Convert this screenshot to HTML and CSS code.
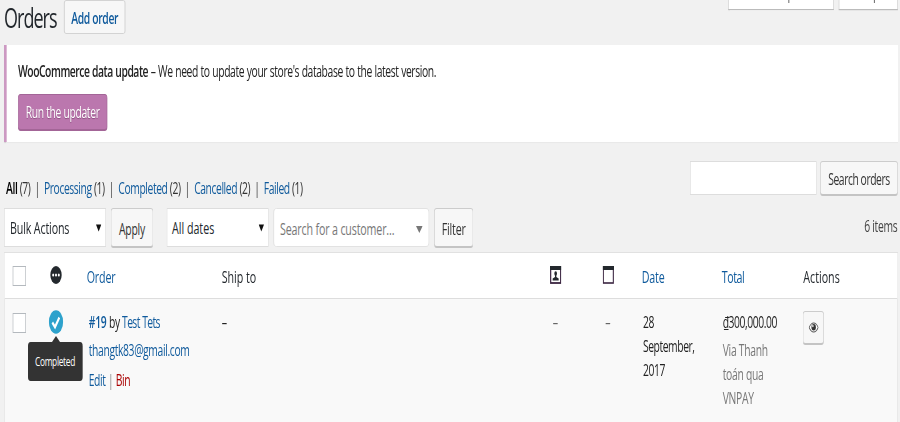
FILE: index.html
```html
<!DOCTYPE html>
<html lang="en">
<head>
<meta charset="utf-8">
<title>Orders</title>
<link rel="stylesheet" href="styles.css">
</head>
<body>
<div class="page">
  <header class="top">
    <h1>Orders</h1>
    <a class="add-order">Add order</a>
    <div class="screen-meta">
      <div class="meta-tab options"><span>Screen Options</span></div>
      <div class="meta-tab help"><span>Help</span></div>
    </div>
  </header>

  <section class="notice">
    <p><strong>WooCommerce data update</strong> – <span class="msg">We need to update your store's database to the latest version.</span></p>
    <button class="btn primary">Run the updater</button>
  </section>

  <div class="search-row">
    <nav class="views"><b>All</b> <i>(7)</i><s>|</s><a>Processing</a> <i>(1)</i><s>|</s><a>Completed</a> <i>(2)</i><s>|</s><a>Cancelled</a> <i>(2)</i><s>|</s><a>Failed</a> <i>(1)</i></nav>
    <div class="search-input"></div>
    <button class="btn search-btn">Search orders</button>
  </div>

  <div class="filters">
    <div class="select bulk"><span>Bulk Actions</span><svg width="8" height="8" viewBox="0 0 9 8"><path d="M0 0h9L4.500 8z"/></svg></div>
    <button class="btn apply">Apply</button>
    <div class="select dates"><span>All dates</span><svg width="8" height="8" viewBox="0 0 9 8"><path d="M0 0h9L4.500 8z"/></svg></div>
    <div class="select customer"><span>Search for a customer...</span><svg width="10" height="7" viewBox="0 0 10 7"><path d="M0 0h10L5 7z"/></svg></div>
    <button class="btn filter">Filter</button>
    <span class="count">6 items</span>
  </div>

  <main class="table">
    <div class="row head">
      <div class="check"><span class="box"></span></div>
      <div class="status"><svg width="18" height="20" viewBox="0 0 18 20"><ellipse cx="9" cy="10" rx="8.500" ry="9" fill="#23282d"/><g fill="#fff"><circle cx="4.800" cy="10" r="1.500"/><circle cx="9" cy="10" r="1.500"/><circle cx="13.200" cy="10" r="1.500"/></g></svg></div>
      <div><a>Order</a></div>
      <div class="ship">Ship to</div>
      <div class="icon"><svg width="17" height="18" viewBox="0 0 17 18"><rect x="1" y="1" width="15" height="16" fill="#fff" stroke="#3a2440" stroke-width="1.800"/><path fill="#23282d" d="M0 0h17v4H0zM6.500 7.500a2 2.200 0 0 1 4 0c0 1-.5 1.700-1 2.200v1.200l3.500 1.600V14.500H4v-2l3.500-1.600V9.700c-.5-.5-1-1.200-1-2.200z"/></svg></div>
      <div class="icon"><svg width="17" height="18" viewBox="0 0 17 18"><rect x="1" y="1" width="15" height="16" fill="#fff" stroke="#3a2440" stroke-width="1.600"/><path fill="#23282d" d="M0 0h17v4H0z"/></svg></div>
      <div><a>Date</a></div>
      <div><a class="total-h">Total</a></div>
      <div class="actions-h">Actions</div>
    </div>
    <div class="row order">
      <div class="check"><span class="box"></span></div>
      <div class="status">
        <svg width="22" height="24" viewBox="0 0 22 24"><ellipse cx="11" cy="12" rx="10.700" ry="11.700" fill="#2ea2cc"/><path d="M5.500 12.500l4 4.500L16 7.500" fill="none" stroke="#fff" stroke-width="3"/></svg>
        <div class="tip">Completed</div>
      </div>
      <div class="cell-order">
        <p><a><b>#19</b></a> by <a class="name">Test Tets</a></p>
        <p class="mail"><a>thangtk83@gmail.com</a></p>
        <p class="edit"><a>Edit</a> <i>|</i> <a class="bin">Bin</a></p>
      </div>
      <div class="cell-ship">–</div>
      <div class="cell-dash">–</div>
      <div class="cell-dash">–</div>
      <div class="cell-date">28<br>September,<br>2017</div>
      <div class="cell-total"><span class="amount">₫300,000.00</span><small>Via Thanh<br>toán qua<br>VNPAY</small></div>
      <div class="cell-actions"><button class="btn view"><svg width="15" height="11" viewBox="0 0 15 11"><path d="M.7 5.500Q3.500 1 7.500 1t6.800 4.500Q11.500 10 7.500 10T.7 5.500z" fill="#fff" stroke="#555" stroke-width="1.200"/><circle cx="7.500" cy="5.200" r="3.300" fill="#333"/><circle cx="6.300" cy="4" r="1.200" fill="#ddd"/></svg></button></div>
    </div>
  </main>
</div>
</body>
</html>
```
FILE: styles.css
```css
* { box-sizing: border-box; }
html, body { margin: 0; height: 422px; overflow: hidden; background: #f1f1f1; }
body { width: 900px; }

/* The screen is drawn half as wide again, then condensed to the window. */
.page {
  width: 1350px;
  height: 422px;
  padding: 0 3px 0 6px;
  transform: scaleX(.666667);
  transform-origin: 0 0;
  overflow: hidden;
  display: flex;
  flex-direction: column;
  font: 16px/24px "Open Sans", "Noto Sans", sans-serif;
  color: #222;
  white-space: nowrap;
}
p, h1 { margin: 0; }
a { color: #0f5a9c; }
i { font-style: normal; }
svg { display: block; }
button { font: inherit; padding: 0; }

.top { display: flex; height: 45px; flex: none; }
h1 { width: 90px; font-size: 27px; font-weight: 400; line-height: 35px; color: #23282d; letter-spacing: -1.450px; }
.add-order { width: 92px; height: 34px; border: 1.500px solid #ccc; border-bottom-width: 1px; border-radius: 3px; background: #f7f7f7; text-align: center; line-height: 34px; font-weight: 600; font-size: 15.500px; letter-spacing: -.5px; }
.screen-meta { margin-left: auto; display: flex; gap: 7px; }
.meta-tab { height: 10px; border: 1.500px solid #ccc; border-top: 0; border-bottom: 1px solid #bbb; background: #fff; box-shadow: 0 1px 1px rgba(0,0,0,.05); overflow: hidden; }
.meta-tab span { display: block; margin-top: -19px; color: #555; line-height: 24px; text-align: center; letter-spacing: -.7px; }
.options { width: 159px; }
.help { width: 89px; }

.notice { flex: none; height: 97px; border-left: 4px solid #cc99c2; background: #fff; padding: 14px 17px; box-shadow: 0 1px 1px rgba(0,0,0,.12); }
.notice p { height: 35px; font-size: 15.500px; letter-spacing: -.590px; word-spacing: .5px; }
.notice strong { font-weight: 600; letter-spacing: -.680px; }
.btn { border: 1.500px solid #ccc; border-bottom: 2px solid #c4c4c4; border-radius: 4px; background: #f7f7f7; color: #333; text-align: center; white-space: nowrap; }
.primary { display: block; width: 134px; height: 37px; background: #bb77ae; border-color: #a36597; color: #fff; text-shadow: 0 1px 1px #8a4f7f; font-size: 15.500px; letter-spacing: -.480px; }

.search-row { flex: none; height: 35px; margin-top: 19px; display: flex; }
.views { flex: 1; line-height: 54px; padding-left: 3px; font-size: 15.500px; letter-spacing: -.620px; }
.views b { color: #000; font-weight: 600; }
.views i { color: #333; }
.views s { text-decoration: none; color: #444; margin: 0 6.500px 0 6px; }
.search-input { width: 190px; height: 34px; border: 1.500px solid #ddd; background: #fff; margin-right: 5px; }
.search-btn { width: 117px; height: 35px; font-size: 15.500px; letter-spacing: -.650px; padding-top: 1px; }

.filters { flex: none; height: 44px; margin-top: 12px; display: flex; align-items: flex-start; }
.select { display: flex; align-items: center; justify-content: space-between; height: 39px; border: 1.500px solid #ddd; background: #fff; color: #23282d; padding: 0 6px 0 8px; }
.select svg { fill: #111; }
.bulk { width: 153px; margin-right: 7px; letter-spacing: -.2px; }
.apply { width: 64px; height: 40px; padding-top: 3px; margin-right: 20px; font-size: 15.600px; letter-spacing: -.3px; }
.dates { width: 153px; margin-right: 7px; }
.dates span { margin-left: -1px; }
.customer { width: 234px; margin-right: 7px; border-radius: 5px; color: #777; padding: 3px 9px 0; letter-spacing: -.230px; }
.customer svg { fill: #777; }
.filter { width: 59px; height: 40px; padding-top: 3px; letter-spacing: -.3px; }
.count { margin-left: auto; line-height: 36px; color: #444; font-size: 15.500px; letter-spacing: -.450px; padding-right: 1px; }

.table { flex: 1; border: 1.500px solid #e1e1e1; border-bottom: 0; background: #f9f9f9; }
.row { display: grid; grid-template-columns: 58.500px 64.500px 202.500px 472.500px 55.500px 102px 120px 121.500px 1fr; }
.head { height: 46px; background: #fff; border-bottom: 1px solid #ddd; line-height: 48px; color: #23282d; letter-spacing: -.2px; }
.ship { letter-spacing: 0; }
.total-h { letter-spacing: -.6px; }
.actions-h { letter-spacing: 0; padding-left: 1px; }
.box { display: block; width: 20px; height: 20px; margin: 13px 0 0 12px; border: 1.500px solid #b4b9be; background: #fff; }
.head .status { padding: 12px 0 0 9px; }
.icon svg { margin: 13px auto 0; position: relative; left: 1px; }
.order { padding-top: 11px; }
.order .box { margin-top: 3px; }
.order .status { position: relative; padding-left: 7px; }
.tip { position: absolute; left: -24px; top: 32px; width: 82px; height: 39px; border-radius: 4px; background: #333; color: #fff; font-size: 12.500px; line-height: 39px; text-align: center; letter-spacing: -.450px; }
.tip::before { content: ""; position: absolute; left: 36px; top: -6px; border: 6px solid transparent; border-top: 0; border-bottom-color: #333; }
.cell-order { padding-left: 3px; font-size: 15.500px; letter-spacing: -.520px; }
.cell-order b { font-weight: 600; letter-spacing: -.3px; }
.name { letter-spacing: -.9px; word-spacing: .5px; }
.mail { margin-top: 4px; }
.edit { margin-top: 6px; }
.edit i { color: #888; }
.bin { color: #a00; }
.cell-dash { text-align: center; color: #666; padding-left: 1px; }
.cell-date { padding-left: 2px; font-size: 15.500px; letter-spacing: -.650px; }
.cell-total { padding-left: 1.500px; font-size: 15.500px; letter-spacing: -.630px; }
.amount { display: block; margin-bottom: 4px; }
.cell-total small { display: block; font-size: 15.500px; color: #777; letter-spacing: -.4px; }
.view { display: flex; align-items: center; justify-content: center; width: 32px; height: 34px; margin-top: 1px; }
```
